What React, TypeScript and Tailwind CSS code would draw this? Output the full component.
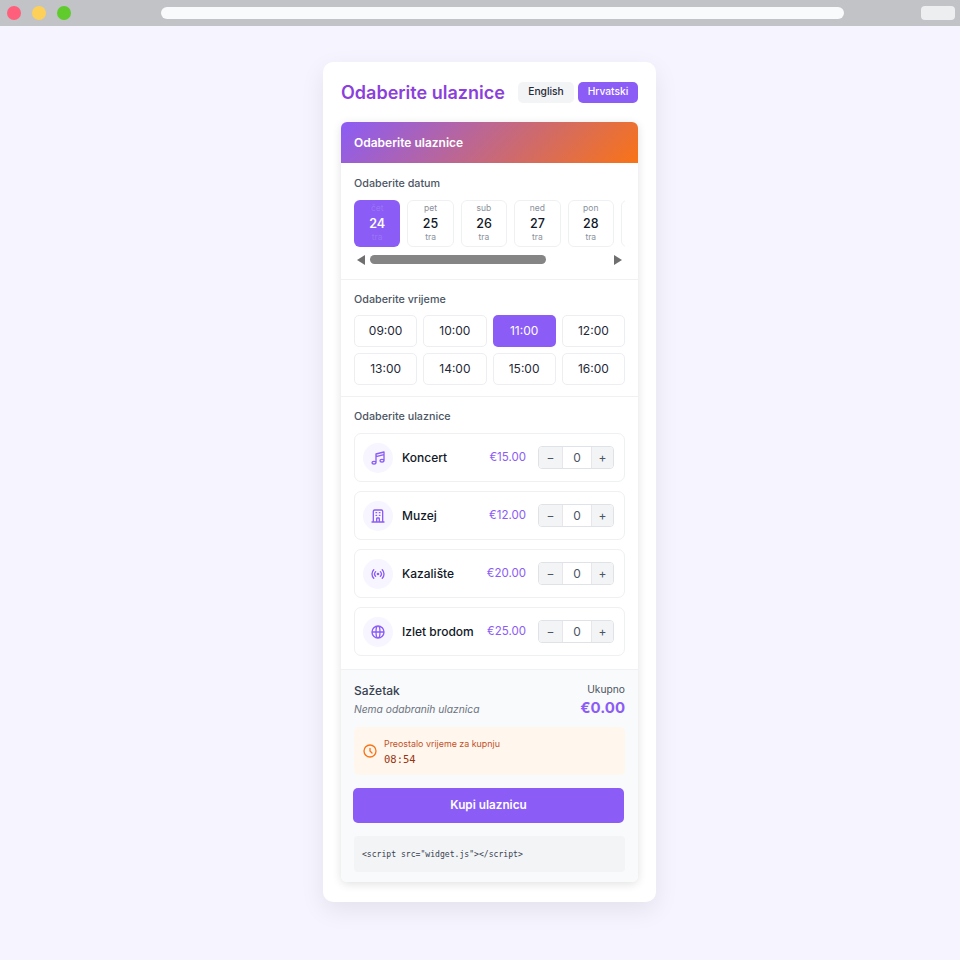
import {
  HiOutlineClock,
  HiOutlineGlobeAlt,
  HiOutlineMusicNote,
  HiOutlineOfficeBuilding,
  HiOutlineStatusOnline,
} from 'react-icons/hi';

const dates = [
  { day: 'čet', num: '24', month: 'tra' },
  { day: 'pet', num: '25', month: 'tra' },
  { day: 'sub', num: '26', month: 'tra' },
  { day: 'ned', num: '27', month: 'tra' },
  { day: 'pon', num: '28', month: 'tra' },
  { day: 'uto', num: '29', month: 'tra' },
];

const times = ['09:00', '10:00', '11:00', '12:00', '13:00', '14:00', '15:00', '16:00'];

const tickets = [
  { name: 'Koncert', price: '€15.00', Icon: HiOutlineMusicNote },
  { name: 'Muzej', price: '€12.00', Icon: HiOutlineOfficeBuilding },
  { name: 'Kazalište', price: '€20.00', Icon: HiOutlineStatusOnline },
  { name: 'Izlet brodom', price: '€25.00', Icon: HiOutlineGlobeAlt },
];

export default function App() {
  return (
    <div className="h-[960px] overflow-hidden bg-[#f6f4fe] font-['Inter',sans-serif]">
      {/* Browser chrome */}
      <div className="flex h-[26px] items-center bg-[#c1c3c6] pl-[7px] pr-[5px]">
        <div className="flex gap-[11px]">
          <span className="h-[14px] w-[14px] rounded-full bg-[#ff5f7a]" />
          <span className="h-[14px] w-[14px] rounded-full bg-[#fdd05a]" />
          <span className="h-[14px] w-[14px] rounded-full bg-[#5fcb2d]" />
        </div>
        <div className="ml-[90px] h-[12px] w-[683px] rounded-full bg-[#f9fafb]" />
        <div className="ml-auto h-[14px] w-[34px] rounded-[4px] bg-[#eceef0]" />
      </div>

      <div className="pt-[36px] pl-[323px]">
        <div className="h-[840px] w-[333px] rounded-[10px] bg-white p-[18px] pt-[16px] shadow-[0_8px_24px_rgba(0,0,0,0.08)]">
          <div className="flex h-[28px] items-center justify-between">
            <h1 className="text-[18px] font-semibold text-[#8b3fdc]">Odaberite ulaznice</h1>
            <div className="flex gap-[4px]">
              <button className="h-[21px] w-[56px] rounded-[5px] bg-[#f3f4f6] text-[10.25px] font-medium text-[#1f2937]">
                English
              </button>
              <button className="h-[21px] w-[60px] rounded-[5px] bg-[#8b5cf6] text-[10.25px] font-medium text-white">
                Hrvatski
              </button>
            </div>
          </div>

          <div className="mt-[16px] h-[760px] overflow-hidden rounded-[6px] bg-white shadow-[0_2px_10px_rgba(0,0,0,0.12)]">
            <div className="flex h-[41px] items-center bg-[linear-gradient(135deg,#8b5cf6,#f97316)] px-[13px] text-[12px] font-semibold text-white">
              Odaberite ulaznice
            </div>

            {/* Date */}
            <div className="h-[117px] border-b border-[#f0f1f3] pl-[13px] pr-[13px] pt-[14px]">
              <div className="text-[10.75px] leading-[14px] font-medium text-[#4b5563]">Odaberite datum</div>
              <div className="mt-[9px] flex gap-[7px] overflow-hidden">
                {dates.map((d, i) => (
                  <div
                    key={d.num}
                    className={
                      i === 0
                        ? 'flex h-[47px] w-[46.4px] shrink-0 flex-col items-center rounded-[6px] bg-[#8b5cf6] pt-[2px] text-white'
                        : 'flex h-[47px] w-[46.4px] shrink-0 flex-col items-center rounded-[6px] border border-[#eef0f2] bg-white pt-[1px]'
                    }
                  >
                    <span className={i === 0 ? 'text-[8.5px] leading-[13px] text-[#9a74f5]' : 'text-[8.5px] leading-[13px] text-[#8a919c]'}>
                      {d.day}
                    </span>
                    <span className={i === 0 ? 'text-[12.5px] leading-[17px] font-semibold' : 'text-[12.5px] leading-[17px] font-medium text-[#111827]'}>
                      {d.num}
                    </span>
                    <span className={i === 0 ? 'text-[8.5px] leading-[11px] text-[#9a74f5]' : 'text-[8.5px] leading-[11px] text-[#8a919c]'}>
                      {d.month}
                    </span>
                  </div>
                ))}
              </div>
              <div className="mt-[6px] flex h-[13px] items-center">
                <span className="ml-[3px] h-0 w-0 border-y-[5px] border-r-[8px] border-y-transparent border-r-[#6f6f6f]" />
                <span className="ml-[5px] h-[9px] w-[176px] rounded-full bg-[#858585]" />
                <span className="ml-auto mr-[3px] h-0 w-0 border-y-[5px] border-l-[8px] border-y-transparent border-l-[#6f6f6f]" />
              </div>
            </div>

            {/* Time */}
            <div className="h-[117px] border-b border-[#f0f1f3] px-[13px] pt-[13px]">
              <div className="text-[10.75px] leading-[14px] font-medium text-[#4b5563]">Odaberite vrijeme</div>
              <div className="mt-[8px] grid grid-cols-4 gap-x-[6px] gap-y-[6px]">
                {times.map((t) => (
                  <div
                    key={t}
                    className={
                      t === '11:00'
                        ? 'flex h-[32px] items-center justify-center rounded-[5px] bg-[#8b5cf6] text-[12px] text-white'
                        : 'flex h-[32px] items-center justify-center rounded-[5px] border border-[#eceef1] bg-white text-[12px] text-[#1f2937]'
                    }
                  >
                    {t}
                  </div>
                ))}
              </div>
            </div>

            {/* Tickets */}
            <div className="h-[272px] px-[13px] pt-[13px]">
              <div className="text-[10.75px] leading-[14px] font-medium text-[#4b5563]">Odaberite ulaznice</div>
              <div className="mt-[9px] flex flex-col gap-[9px]">
                {tickets.map(({ name, price, Icon }) => (
                  <div
                    key={name}
                    className="flex h-[49px] items-center rounded-[7px] border border-[#eef0f2] bg-white pl-[8px] pr-[10px]"
                  >
                    <div className="flex h-[30px] w-[30px] items-center justify-center rounded-full bg-[#f7f5ff]">
                      <Icon className="h-[16px] w-[16px] text-[#8b5cf6]" />
                    </div>
                    <span className="ml-[9px] text-[12px] font-medium text-[#111827]">{name}</span>
                    <span className="ml-auto text-[11.5px] text-[#8b5cf6]">{price}</span>
                    <div className="ml-[12px] flex h-[23px] w-[76px] overflow-hidden rounded-[4px] border border-[#dfe2e6] text-[12px] text-[#4b5563]">
                      <span className="flex w-[23px] items-center justify-center bg-[#f3f4f6]">−</span>
                      <span className="flex flex-1 items-center justify-center border-x border-[#e5e7eb] bg-white">0</span>
                      <span className="flex w-[21px] items-center justify-center bg-[#f3f4f6]">+</span>
                    </div>
                  </div>
                ))}
              </div>
            </div>

            {/* Summary */}
            <div className="h-[213px] border-t border-[#f0f1f3] bg-[#f9fafb] px-[13px] pt-[12px]">
              <div className="flex justify-between">
                <div>
                  <div className="text-[12px] leading-[18px] font-medium text-[#374151]">Sažetak</div>
                  <div className="mt-[1px] text-[10.25px] leading-[16px] text-[#6b7280] italic">Nema odabranih ulaznica</div>
                </div>
                <div className="text-right">
                  <div className="text-[10.25px] leading-[15px] text-[#4b5563]">Ukupno</div>
                  <div className="text-[15px] leading-[22px] font-bold text-[#8b5cf6]">€0.00</div>
                </div>
              </div>

              <div className="mt-[8px] flex h-[48px] items-center rounded-[5px] bg-[#fff7ed] pl-[8px]">
                <HiOutlineClock className="h-[16px] w-[16px] text-[#f97316]" />
                <div className="ml-[6px]">
                  <div className="text-[8.9px] leading-[13px] text-[#c2502a]">Preostalo vrijeme za kupnju</div>
                  <div className="mt-[2px] font-['DejaVu_Sans_Mono',monospace] text-[10.5px] leading-[14px] text-[#9a3412]">
                    08:54
                  </div>
                </div>
              </div>

              <button className="mt-[13px] -ml-px h-[35px] w-[271px] rounded-[5px] bg-[#8b5cf6] text-[11.75px] font-semibold text-white">
                Kupi ulaznicu
              </button>

              <div className="mt-[13px] flex h-[36px] items-center rounded-[4px] bg-[#f3f4f6] px-[8px] font-['DejaVu_Sans_Mono',monospace] text-[8.1px] text-[#374151]">
                {'<script src="widget.js"></script>'}
              </div>
            </div>
          </div>
        </div>
      </div>
    </div>
  );
}
